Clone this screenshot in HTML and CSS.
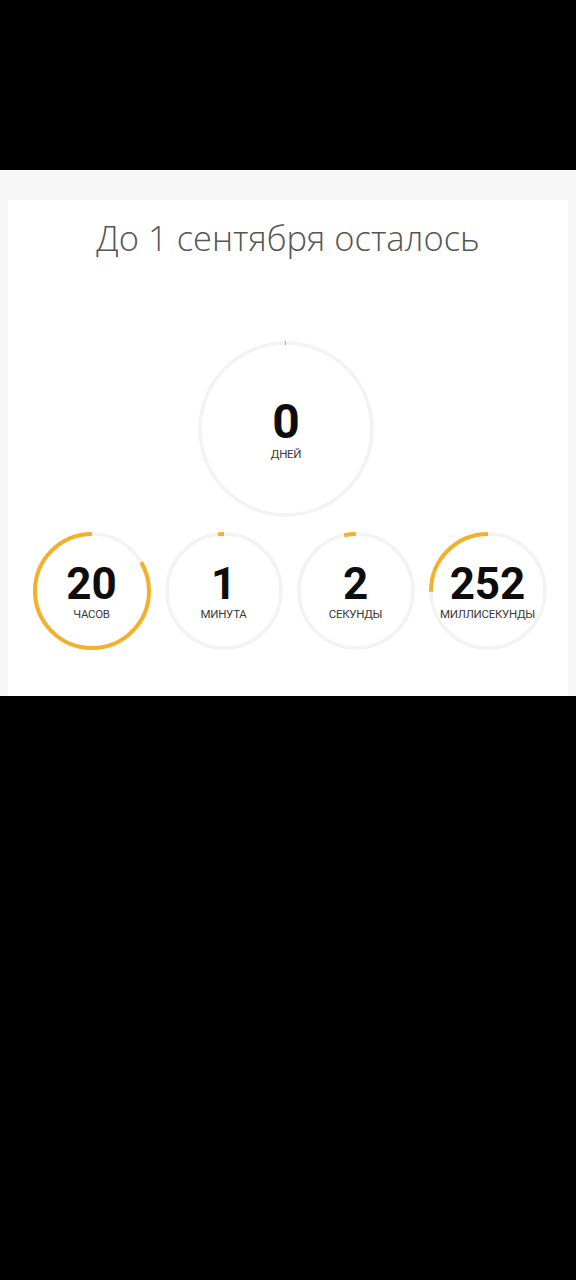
FILE: index.html
```html
<!DOCTYPE html>
<html lang="ru">
<head>
    <meta charset="UTF-8">
    <meta name="viewport" content="width=device-width, initial-scale=1.0">
    <title>До 1 сентября осталось</title>
    <link rel="stylesheet" href="styles.css">
</head>
<body>

    <div class="top-black"></div>

    <div class="page">
        <div class="card">
            <h2 class="title">До 1 сентября осталось</h2>

            <!-- Дни -->
            <div class="ring ring-big">
                <svg width="176" height="176" viewBox="0 0 176 176">
                    <circle class="track" cx="88" cy="88" r="86"></circle>
                    <g transform="translate(176 0) scale(-1 1) rotate(-90 88 88)">
                        <circle class="bar" cx="88" cy="88" r="86" stroke-dasharray="1.2 600"></circle>
                    </g>
                </svg>
                <div class="ring-text">
                    <div class="num">0</div>
                    <div class="label">дней</div>
                </div>
            </div>

            <div class="row">
                <!-- Часы: 20 / 24 -->
                <div class="ring ring-small">
                    <svg width="118" height="118" viewBox="0 0 118 118">
                        <circle class="track" cx="59" cy="59" r="57"></circle>
                        <g transform="translate(118 0) scale(-1 1) rotate(-90 59 59)">
                            <circle class="bar" cx="59" cy="59" r="57" stroke-dasharray="298.45 400"></circle>
                        </g>
                    </svg>
                    <div class="ring-text">
                        <div class="num">20</div>
                        <div class="label">часов</div>
                    </div>
                </div>

                <!-- Минуты: 1 / 60 -->
                <div class="ring ring-small">
                    <svg width="118" height="118" viewBox="0 0 118 118">
                        <circle class="track" cx="59" cy="59" r="57"></circle>
                        <g transform="translate(118 0) scale(-1 1) rotate(-90 59 59)">
                            <circle class="bar" cx="59" cy="59" r="57" stroke-dasharray="5.97 400"></circle>
                        </g>
                    </svg>
                    <div class="ring-text">
                        <div class="num">1</div>
                        <div class="label">минута</div>
                    </div>
                </div>

                <!-- Секунды: 2 / 60 -->
                <div class="ring ring-small">
                    <svg width="118" height="118" viewBox="0 0 118 118">
                        <circle class="track" cx="59" cy="59" r="57"></circle>
                        <g transform="translate(118 0) scale(-1 1) rotate(-90 59 59)">
                            <circle class="bar" cx="59" cy="59" r="57" stroke-dasharray="11.94 400"></circle>
                        </g>
                    </svg>
                    <div class="ring-text">
                        <div class="num">2</div>
                        <div class="label">секунды</div>
                    </div>
                </div>

                <!-- Миллисекунды: 252 / 1000 -->
                <div class="ring ring-small">
                    <svg width="118" height="118" viewBox="0 0 118 118">
                        <circle class="track" cx="59" cy="59" r="57"></circle>
                        <g transform="translate(118 0) scale(-1 1) rotate(-90 59 59)">
                            <circle class="bar" cx="59" cy="59" r="57" stroke-dasharray="90.25 400"></circle>
                        </g>
                    </svg>
                    <div class="ring-text">
                        <div class="num">252</div>
                        <div class="label">миллисекунды</div>
                    </div>
                </div>
            </div>
        </div>
    </div>

</body>
</html>
```

FILE: styles.css
```css
html, body {
    margin: 0;
    padding: 0;
    background-color: #000;
}
body {
    min-height: 1280px;
    font-family: Roboto, "Noto Sans", sans-serif;
}
.top-black {
    height: 170px;
}
.page {
    background-color: #f7f7f7;
    padding: 30px 8px 0;
}
.card {
    background-color: #fff;
    padding: 18px 0 46px;
    display: flex;
    flex-direction: column;
    align-items: center;
}
.title {
    margin: 0 0 1px;
    font-family: "Open Sans", sans-serif;
    font-weight: 300;
    font-size: 34.5px;
    line-height: 40px;
    color: #555;
    text-align: center;
}
.ring {
    display: grid;
    place-items: center;
}
.ring svg,
.ring .ring-text {
    grid-area: 1 / 1;
}
.ring-big {
    margin-top: 82px;
    margin-left: -4px;
}
.track {
    fill: none;
    stroke: #f3f3f3;
    stroke-width: 3.5;
}
.bar {
    fill: none;
    stroke: #f3b12b;
    stroke-width: 4;
}
.ring-text {
    display: flex;
    flex-direction: column;
    align-items: center;
}
.num {
    font-weight: 700;
    color: #0d0d0d;
    font-size: 44px;
    line-height: 44px;
}
.ring-big .num {
    font-size: 48px;
    line-height: 48px;
}
.label {
    margin-top: 2px;
    font-size: 11.5px;
    line-height: 13px;
    color: #3a3a3a;
    text-transform: uppercase;
    letter-spacing: -0.3px;
}
.row {
    margin-top: 15px;
    display: flex;
    gap: 14px;
    margin-left: 3px;
}
```
